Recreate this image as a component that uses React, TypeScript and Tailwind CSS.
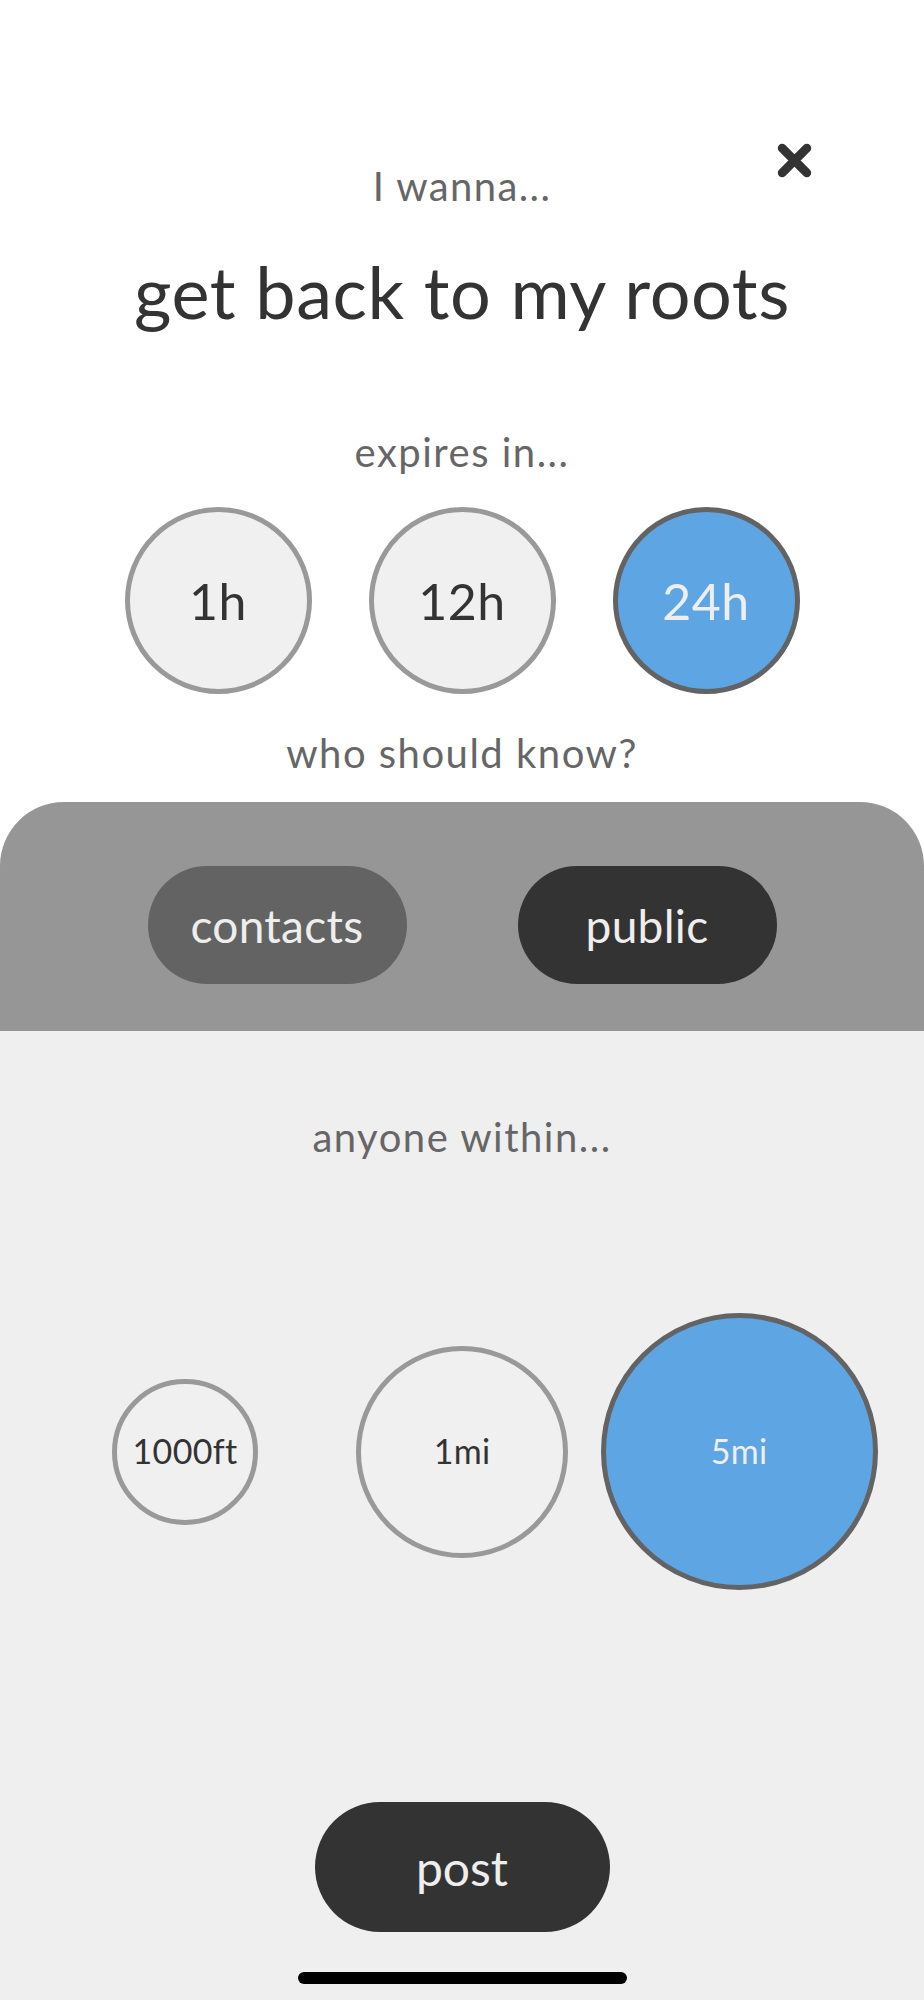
import clsx from "clsx";

const expiryOptions = ["1h", "12h", "24h"];
const radiusOptions = [
  { label: "1000ft", size: "h-[146px] w-[146px]" },
  { label: "1mi", size: "h-[212px] w-[212px]" },
  { label: "5mi", size: "h-[277px] w-[277px]" }
];

function CloseIcon(): JSX.Element {
  return (
    <svg viewBox="0 0 36 36" className="h-[37px] w-[37px]" aria-label="Close" role="img">
      <path d="M6 6 L30 30 M30 6 L6 30" stroke="#333333" strokeWidth="8.5" strokeLinecap="round" fill="none" />
    </svg>
  );
}

export default function App(): JSX.Element {
  const selectedExpiry = "24h";
  const selectedRadius = "5mi";
  const audience = "public";

  return (
    <div className="flex min-h-[2000px] w-full flex-col bg-white font-['Lato',sans-serif] leading-[1.2]">
      <div className="relative flex flex-col items-center bg-white">
        <button type="button" className="absolute left-[776px] top-[142px]">
          <CloseIcon />
        </button>

        <p className="mt-[162px] text-[40px] tracking-[1.4px] text-[#666666]">I wanna...</p>
        <h1 className="mt-[38px] text-[72px] tracking-[0.6px] text-[#333333]">get back to my roots</h1>

        <p className="mt-[94px] text-[40px] tracking-[1.5px] text-[#666666]">expires in...</p>
        <div className="mt-[31px] flex">
          {expiryOptions.map((option) => (
            <div key={`expiry-${option}`} className="flex w-[244px] justify-center">
              <button
                type="button"
                className={clsx(
                  "flex h-[187px] w-[187px] items-center justify-center rounded-full border-[5px] text-[50px] tracking-[0.5px]",
                  selectedExpiry === option
                    ? "border-[#636363] bg-[#5ea5e3] text-[#eeeeee]"
                    : "border-[#999999] bg-[#f0f0f0] text-[#333333]"
                )}
              >
                {option}
              </button>
            </div>
          ))}
        </div>

        <p className="mt-[35px] mb-[25px] text-[40px] tracking-[1.5px] text-[#666666]">who should know?</p>
      </div>

      <div className="flex justify-center gap-[111px] rounded-t-[64px] bg-[#969696] pt-[64px] pb-[47px]">
        {["contacts", "public"].map((option) => (
          <button
            key={`audience-${option}`}
            type="button"
            className={clsx(
              "flex h-[118px] w-[259px] items-center justify-center rounded-full text-[46px] tracking-[0.3px] text-[#eeeeee]",
              audience === option ? "bg-[#333333]" : "bg-[#636363]"
            )}
          >
            {option}
          </button>
        ))}
      </div>

      <div className="flex flex-1 flex-col items-center bg-[#efefef]">
        <p className="mt-[82px] text-[40px] tracking-[1.5px] text-[#666666]">anyone within...</p>
        <div className="mt-[152px] flex h-[277px] items-center">
          {radiusOptions.map((option) => (
            <div key={`radius-${option.label}`} className="flex w-[277px] justify-center">
              <button
                type="button"
                className={clsx(
                  "flex items-center justify-center rounded-full border-[5px] text-[34px] tracking-[0.3px]",
                  option.size,
                  selectedRadius === option.label
                    ? "border-[#636363] bg-[#5ea5e3] text-[#eeeeee]"
                    : "border-[#999999] bg-[#f0f0f0] text-[#333333]"
                )}
              >
                {option.label}
              </button>
            </div>
          ))}
        </div>

        <button
          type="button"
          className="mt-[212px] flex h-[130px] w-[295px] items-center justify-center rounded-full bg-[#333333] text-[48px] text-[#eeeeee]"
        >
          post
        </button>

        <div className="mt-[40px] mb-[17px] h-[12px] w-[329px] rounded-full bg-black" />
      </div>
    </div>
  );
}
